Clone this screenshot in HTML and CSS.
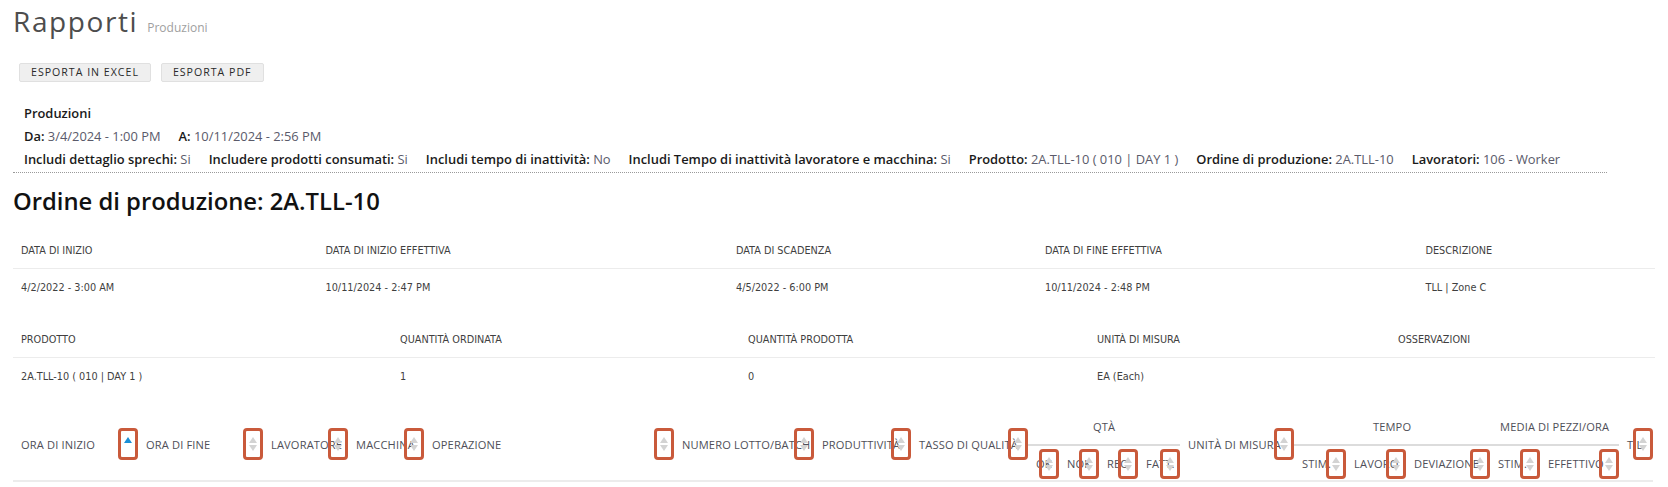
FILE: index.html
```html
<!DOCTYPE html>
<html lang="it">
<head>
<meta charset="utf-8">
<title>Rapporti - Produzioni</title>
<link rel="stylesheet" href="styles.css">
</head>
<body>
<div class="page">
  <header class="page-head">
    <h1 class="page-title">Rapporti</h1>
    <span class="page-sub">Produzioni</span>
  </header>

  <div class="actions">
    <button class="btn" type="button">Esporta in Excel</button>
    <button class="btn" type="button">Esporta PDF</button>
  </div>

  <div class="filters">
    <div class="f-title">Produzioni</div>
    <div class="f-row">
      <span class="f-item"><b>Da:</b> 3/4/2024 - 1:00 PM</span>
      <span class="f-item"><b>A:</b> 10/11/2024 - 2:56 PM</span>
    </div>
    <div class="f-row">
      <span class="f-item"><b>Includi dettaglio sprechi:</b> Si</span>
      <span class="f-item"><b>Includere prodotti consumati:</b> Si</span>
      <span class="f-item"><b>Includi tempo di inattività:</b> No</span>
      <span class="f-item"><b>Includi Tempo di inattività lavoratore e macchina:</b> Si</span>
      <span class="f-item"><b>Prodotto:</b> 2A.TLL-10 ( 010 | DAY 1 )</span>
      <span class="f-item"><b>Ordine di produzione:</b> 2A.TLL-10</span>
      <span class="f-item"><b>Lavoratori:</b> 106 - Worker</span>
    </div>
  </div>

  <h2 class="order-title">Ordine di produzione: 2A.TLL-10</h2>

  <table class="info">
    <colgroup>
      <col class="w305"><col class="w410"><col class="w309"><col class="w380"><col class="w238">
    </colgroup>
    <thead>
      <tr><th>DATA DI INIZIO</th><th>DATA DI INIZIO EFFETTIVA</th><th>DATA DI SCADENZA</th><th>DATA DI FINE EFFETTIVA</th><th>DESCRIZIONE</th></tr>
    </thead>
    <tbody>
      <tr><td>4/2/2022 - 3:00 AM</td><td>10/11/2024 - 2:47 PM</td><td>4/5/2022 - 6:00 PM</td><td>10/11/2024 - 2:48 PM</td><td>TLL | Zone C</td></tr>
    </tbody>
  </table>

  <table class="info info-2">
    <colgroup>
      <col class="w379"><col class="w348"><col class="w349"><col class="w301"><col class="w265">
    </colgroup>
    <thead>
      <tr><th>PRODOTTO</th><th>QUANTITÀ ORDINATA</th><th>QUANTITÀ PRODOTTA</th><th>UNITÀ DI MISURA</th><th>OSSERVAZIONI</th></tr>
    </thead>
    <tbody>
      <tr><td>2A.TLL-10 ( 010 | DAY 1 )</td><td>1</td><td>0</td><td>EA (Each)</td><td></td></tr>
    </tbody>
  </table>

  <table class="grid">
    <colgroup>
      <col class="c125"><col class="c125"><col class="c85"><col class="c76"><col class="c250"><col class="c140"><col class="c97"><col class="c117">
      <col class="c31"><col class="c40"><col class="c39"><col class="c42">
      <col class="c114">
      <col class="c52"><col class="c60"><col class="c84">
      <col class="c50"><col class="c79">
      <col class="c34">
    </colgroup>
    <thead>
      <tr class="g-top">
        <th rowspan="2" class="sortable">ORA DI INIZIO<span class="sort mark"><svg viewBox="0 0 8 14" width="8" height="14"><path class="up-on" d="M0 6 L4 0 L8 6 Z"/></svg></span></th>
        <th rowspan="2" class="sortable">ORA DI FINE<span class="sort mark"><svg viewBox="0 0 8 14" width="8" height="14"><path d="M0 6 L4 0 L8 6 Z"/><path d="M0 8 L8 8 L4 14 Z"/></svg></span></th>
        <th rowspan="2" class="sortable">LAVORATORE<span class="sort mark"><svg viewBox="0 0 8 14" width="8" height="14"><path d="M0 6 L4 0 L8 6 Z"/><path d="M0 8 L8 8 L4 14 Z"/></svg></span></th>
        <th rowspan="2" class="sortable">MACCHINA<span class="sort mark"><svg viewBox="0 0 8 14" width="8" height="14"><path d="M0 6 L4 0 L8 6 Z"/><path d="M0 8 L8 8 L4 14 Z"/></svg></span></th>
        <th rowspan="2" class="sortable">OPERAZIONE<span class="sort mark"><svg viewBox="0 0 8 14" width="8" height="14"><path d="M0 6 L4 0 L8 6 Z"/><path d="M0 8 L8 8 L4 14 Z"/></svg></span></th>
        <th rowspan="2" class="sortable">NUMERO LOTTO/BATCH<span class="sort mark"><svg viewBox="0 0 8 14" width="8" height="14"><path d="M0 6 L4 0 L8 6 Z"/><path d="M0 8 L8 8 L4 14 Z"/></svg></span></th>
        <th rowspan="2" class="sortable">PRODUTTIVITÀ<span class="sort mark"><svg viewBox="0 0 8 14" width="8" height="14"><path d="M0 6 L4 0 L8 6 Z"/><path d="M0 8 L8 8 L4 14 Z"/></svg></span></th>
        <th rowspan="2" class="sortable">TASSO DI QUALITÀ<span class="sort mark"><svg viewBox="0 0 8 14" width="8" height="14"><path d="M0 6 L4 0 L8 6 Z"/><path d="M0 8 L8 8 L4 14 Z"/></svg></span></th>
        <th colspan="4" class="group">QTÀ</th>
        <th rowspan="2" class="sortable">UNITÀ DI MISURA<span class="sort mark"><svg viewBox="0 0 8 14" width="8" height="14"><path d="M0 6 L4 0 L8 6 Z"/><path d="M0 8 L8 8 L4 14 Z"/></svg></span></th>
        <th colspan="3" class="group">TEMPO</th>
        <th colspan="2" class="group">MEDIA DI PEZZI/ORA</th>
        <th rowspan="2" class="sortable">T.L<span class="sort mark"><svg viewBox="0 0 8 14" width="8" height="14"><path d="M0 6 L4 0 L8 6 Z"/><path d="M0 8 L8 8 L4 14 Z"/></svg></span></th>
      </tr>
      <tr class="g-sub">
        <th class="sortable">OK<span class="sort mark sm"><svg viewBox="0 0 8 14" width="8" height="14"><path d="M0 6 L4 0 L8 6 Z"/><path d="M0 8 L8 8 L4 14 Z"/></svg></span></th>
        <th class="sortable">NOK<span class="sort mark sm"><svg viewBox="0 0 8 14" width="8" height="14"><path d="M0 6 L4 0 L8 6 Z"/><path d="M0 8 L8 8 L4 14 Z"/></svg></span></th>
        <th class="sortable">REC.<span class="sort mark sm"><svg viewBox="0 0 8 14" width="8" height="14"><path d="M0 6 L4 0 L8 6 Z"/><path d="M0 8 L8 8 L4 14 Z"/></svg></span></th>
        <th class="sortable">FATT.<span class="sort mark sm"><svg viewBox="0 0 8 14" width="8" height="14"><path d="M0 6 L4 0 L8 6 Z"/><path d="M0 8 L8 8 L4 14 Z"/></svg></span></th>
        <th class="sortable">STIM.<span class="sort mark sm"><svg viewBox="0 0 8 14" width="8" height="14"><path d="M0 6 L4 0 L8 6 Z"/><path d="M0 8 L8 8 L4 14 Z"/></svg></span></th>
        <th class="sortable">LAVORO<span class="sort mark sm"><svg viewBox="0 0 8 14" width="8" height="14"><path d="M0 6 L4 0 L8 6 Z"/><path d="M0 8 L8 8 L4 14 Z"/></svg></span></th>
        <th class="sortable">DEVIAZIONE<span class="sort mark sm"><svg viewBox="0 0 8 14" width="8" height="14"><path d="M0 6 L4 0 L8 6 Z"/><path d="M0 8 L8 8 L4 14 Z"/></svg></span></th>
        <th class="sortable">STIM.<span class="sort mark sm"><svg viewBox="0 0 8 14" width="8" height="14"><path d="M0 6 L4 0 L8 6 Z"/><path d="M0 8 L8 8 L4 14 Z"/></svg></span></th>
        <th class="sortable">EFFETTIVO<span class="sort mark sm"><svg viewBox="0 0 8 14" width="8" height="14"><path d="M0 6 L4 0 L8 6 Z"/><path d="M0 8 L8 8 L4 14 Z"/></svg></span></th>
      </tr>
    </thead>
  </table>
</div>
</body>
</html>
```
FILE: styles.css
```css
html, body {
  margin: 0;
  padding: 0;
  background: #ffffff;
}

body {
  font-family: "Open Sans", "Noto Sans", sans-serif;
  color: #222;
}

.page {
  padding: 4px 0 0 13px;
  width: 1642px;
}

/* ---------- Heading ---------- */
.page-head {
  display: flex;
  align-items: baseline;
  gap: 9px;
  height: 34px;
}

.page-title {
  margin: 0;
  font-size: 28px;
  line-height: 34px;
  font-weight: 400;
  letter-spacing: 1.6px;
  color: #4d4d4d;
}

.page-sub {
  font-size: 12px;
  color: #a0a0a0;
}

/* ---------- Buttons ---------- */
.actions {
  display: flex;
  gap: 10px;
  margin-top: 25px;
  padding-left: 6px;
}

.btn {
  height: 19px;
  padding: 0 11px;
  font-family: "Open Sans", "Noto Sans", sans-serif;
  font-size: 10.6px;
  letter-spacing: 1px;
  text-transform: uppercase;
  color: #2a2a2a;
  background: #efefef;
  border: 1px solid #e0e0e0;
  border-radius: 2px;
  line-height: 17px;
}

/* ---------- Filters ---------- */
.filters {
  width: 1594px;
  margin-top: 20px;
  padding: 0 0 1px 11px;
  box-sizing: border-box;
  border-bottom: 1px dotted #9a9a9a;
  font-size: 12.9px;
}

.f-title {
  font-weight: 600;
  line-height: 23px;
  color: #1a1a1a;
}

.f-row {
  display: flex;
  gap: 18px;
  line-height: 23px;
  white-space: nowrap;
}

.f-item {
  color: #5a5a6a;
}

.f-item b {
  font-weight: 600;
  color: #1a1a1a;
}

/* ---------- Order title ---------- */
.order-title {
  margin: 13px 0 0 0;
  font-size: 23.8px;
  line-height: 30px;
  font-weight: 600;
  color: #111;
}

/* ---------- Info tables ---------- */
.info {
  width: 1642px;
  table-layout: fixed;
  border-collapse: collapse;
  margin-top: 16px;
  font-family: "Liberation Sans Narrow", "DejaVu Sans Condensed", "Liberation Sans", sans-serif;
  font-size: 10.8px;
  color: #3f3f3f;
}

.info-2 {
  margin-top: 16px;
}

.info th,
.info td {
  text-align: left;
  font-weight: 400;
  padding: 0 0 0 8px;
  height: 36px;
  white-space: nowrap;
}

.info thead th {
  border-bottom: 1px solid #ececec;
}

.w305 { width: 304.5px; }
.w410 { width: 410.5px; }
.w309 { width: 309px; }
.w380 { width: 380.5px; }
.w238 { width: 237.5px; }
.w379 { width: 379px; }
.w348 { width: 348px; }
.w349 { width: 349px; }
.w301 { width: 301px; }
.w265 { width: 265px; }

/* ---------- Data grid ---------- */
.grid {
  width: 1640px;
  table-layout: fixed;
  border-collapse: collapse;
  margin-top: 14px;
  font-family: "Open Sans", "Noto Sans", sans-serif;
  font-size: 11.1px;
  letter-spacing: 0.15px;
  color: #4f4f58;
}

.grid th {
  position: relative;
  text-align: left;
  font-weight: 400;
  padding: 0 0 0 8px;
  height: 36px;
  white-space: nowrap;
  vertical-align: middle;
}

.grid tr.g-sub th {
  height: 34px;
}

.grid th.group {
  text-align: center;
  padding: 0;
  border-bottom: 2px solid #dcdcdc;
}

.grid thead tr.g-sub th {
  border-bottom: 2px solid #ececec;
}

.grid thead tr.g-top th[rowspan] {
  border-bottom: 2px solid #ececec;
}

.c125 { width: 125px; }
.c85 { width: 85px; }
.c76 { width: 76px; }
.c250 { width: 250px; }
.c140 { width: 140px; }
.c97 { width: 97px; }
.c117 { width: 117px; }
.c31 { width: 31px; }
.c40 { width: 40px; }
.c39 { width: 39px; }
.c42 { width: 42px; }
.c114 { width: 114px; }
.c52 { width: 52px; }
.c60 { width: 60px; }
.c84 { width: 84px; }
.c50 { width: 50px; }
.c79 { width: 79px; }
.c34 { width: 34px; }

/* sort icon with highlight frame */
.sort {
  position: absolute;
  right: 0;
  top: 50%;
  width: 20px;
  height: 32px;
  margin-top: -16px;
  box-sizing: border-box;
  display: flex;
  align-items: center;
  justify-content: center;
}

.sort.sm {
  height: 30px;
  margin-top: -14px;
}

.mark {
  border: 3px solid #c95a3b;
  border-radius: 4px;
}

.sort svg {
  display: block;
}

.sort path {
  fill: #d3d3d3;
}

.sort path.up-on {
  fill: #1b8fd6;
}
```
